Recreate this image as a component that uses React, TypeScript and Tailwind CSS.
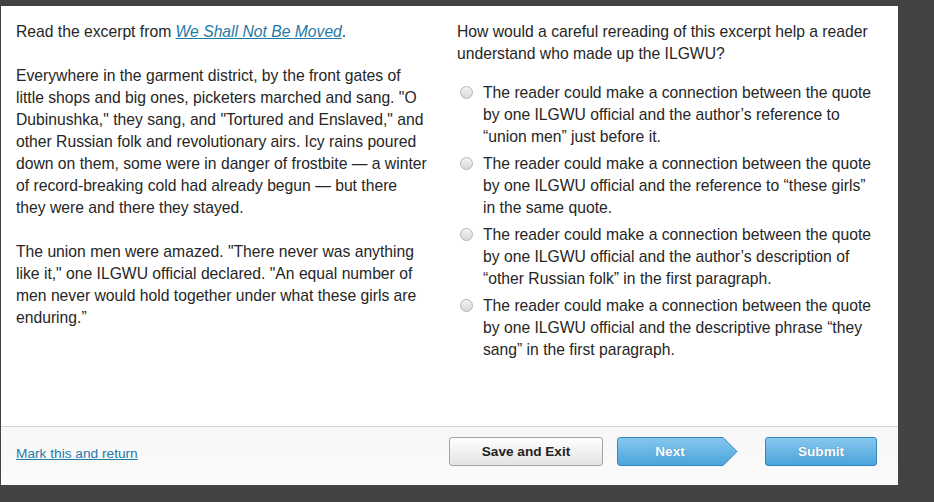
import React from "react";

const options = [
  "The reader could make a connection between the quote by one ILGWU official and the author\u2019s reference to \u201cunion men\u201d just before it.",
  "The reader could make a connection between the quote by one ILGWU official and the reference to \u201cthese girls\u201d in the same quote.",
  "The reader could make a connection between the quote by one ILGWU official and the author\u2019s description of \u201cother Russian folk\u201d in the first paragraph.",
  "The reader could make a connection between the quote by one ILGWU official and the descriptive phrase \u201cthey sang\u201d in the first paragraph.",
];

function Radio() {
  return (
    <span className="mt-[4px] block h-[13px] w-[13px] shrink-0 rounded-full border border-[#b5b5b5] bg-gradient-to-b from-[#f4f4f4] to-[#d8d8d8]" />
  );
}

export default function App() {
  return (
    <div className="h-[502px] w-[934px] bg-[#434343] pl-[1px] pt-[6px] font-['Liberation_Sans',Arial,sans-serif] text-[15.7px] leading-[22px] text-[#262626]">
      <div className="flex h-[479px] w-[897px] flex-col bg-white">
        <div className="flex flex-1 px-[15px] pt-[15px]">
          <div className="w-[413px]">
            <p>
              Read the excerpt from{" "}
              <span className="italic text-[#1f7aa6] underline">We Shall Not Be Moved</span>.
            </p>
            <p className="mt-[22px]">
              Everywhere in the garment district, by the front gates of little shops and big ones, picketers marched and sang. "O Dubinushka," they sang, and "Tortured and Enslaved," and other Russian folk and revolutionary airs. Icy rains poured down on them, some were in danger of frostbite — a winter of record-breaking cold had already begun — but there they were and there they stayed.
            </p>
            <p className="mt-[22px]">
              The union men were amazed. "There never was anything like it," one ILGWU official declared. "An equal number of men never would hold together under what these girls are enduring.”
            </p>
          </div>
          <div className="ml-[28px] w-[420px]">
            <p>How would a careful rereading of this excerpt help a reader understand who made up the ILGWU?</p>
            <div className="mt-[16.5px] flex flex-col gap-[5px]">
              {options.map((o, i) => (
                <div key={i} className="flex gap-[10px] pl-[3px]">
                  <Radio />
                  <span>{o}</span>
                </div>
              ))}
            </div>
          </div>
        </div>
        <div className="flex h-[59px] items-start border-t border-[#d4d4d4] bg-gradient-to-b from-[#f7f7f7] to-[#fbfbfb] pl-[15px] pt-[10px]">
          <a className="mt-[8px] text-[13.7px] leading-[18px] text-[#1f7aa6] underline">Mark this and return</a>
          <div className="ml-auto mr-[21px] flex items-center">
            <button className="h-[29px] w-[154px] rounded-[3px] border border-[#a3a3a3] bg-gradient-to-b from-white to-[#e4e4e4] text-[13.6px] font-bold text-[#222]">
              Save and Exit
            </button>
            <div className="relative ml-[14px] h-[29px] w-[121px]">
              <svg className="absolute inset-0" width="121" height="29" viewBox="0 0 121 29">
                <defs>
                  <linearGradient id="nb" x1="0" y1="0" x2="0" y2="1">
                    <stop offset="0" stopColor="#86c8ee" />
                    <stop offset="1" stopColor="#4aa3dc" />
                  </linearGradient>
                </defs>
                <path d="M3.5 0.5 H106 L120 14.5 L106 28.5 H3.5 Q0.5 28.5 0.5 25.5 V3.5 Q0.5 0.5 3.5 0.5 Z" fill="url(#nb)" stroke="#3186bd" />
              </svg>
              <span className="relative flex h-full w-[106px] items-center justify-center text-[13.6px] font-bold text-white [text-shadow:0_0_1px_#3a7fae]">
                Next
              </span>
            </div>
            <button className="ml-[27px] h-[29px] w-[112px] rounded-[3px] border border-[#3186bd] bg-gradient-to-b from-[#86c8ee] to-[#4aa3dc] text-[13.6px] font-bold text-white [text-shadow:0_0_1px_#3a7fae]">
              Submit
            </button>
          </div>
        </div>
      </div>
    </div>
  );
}
